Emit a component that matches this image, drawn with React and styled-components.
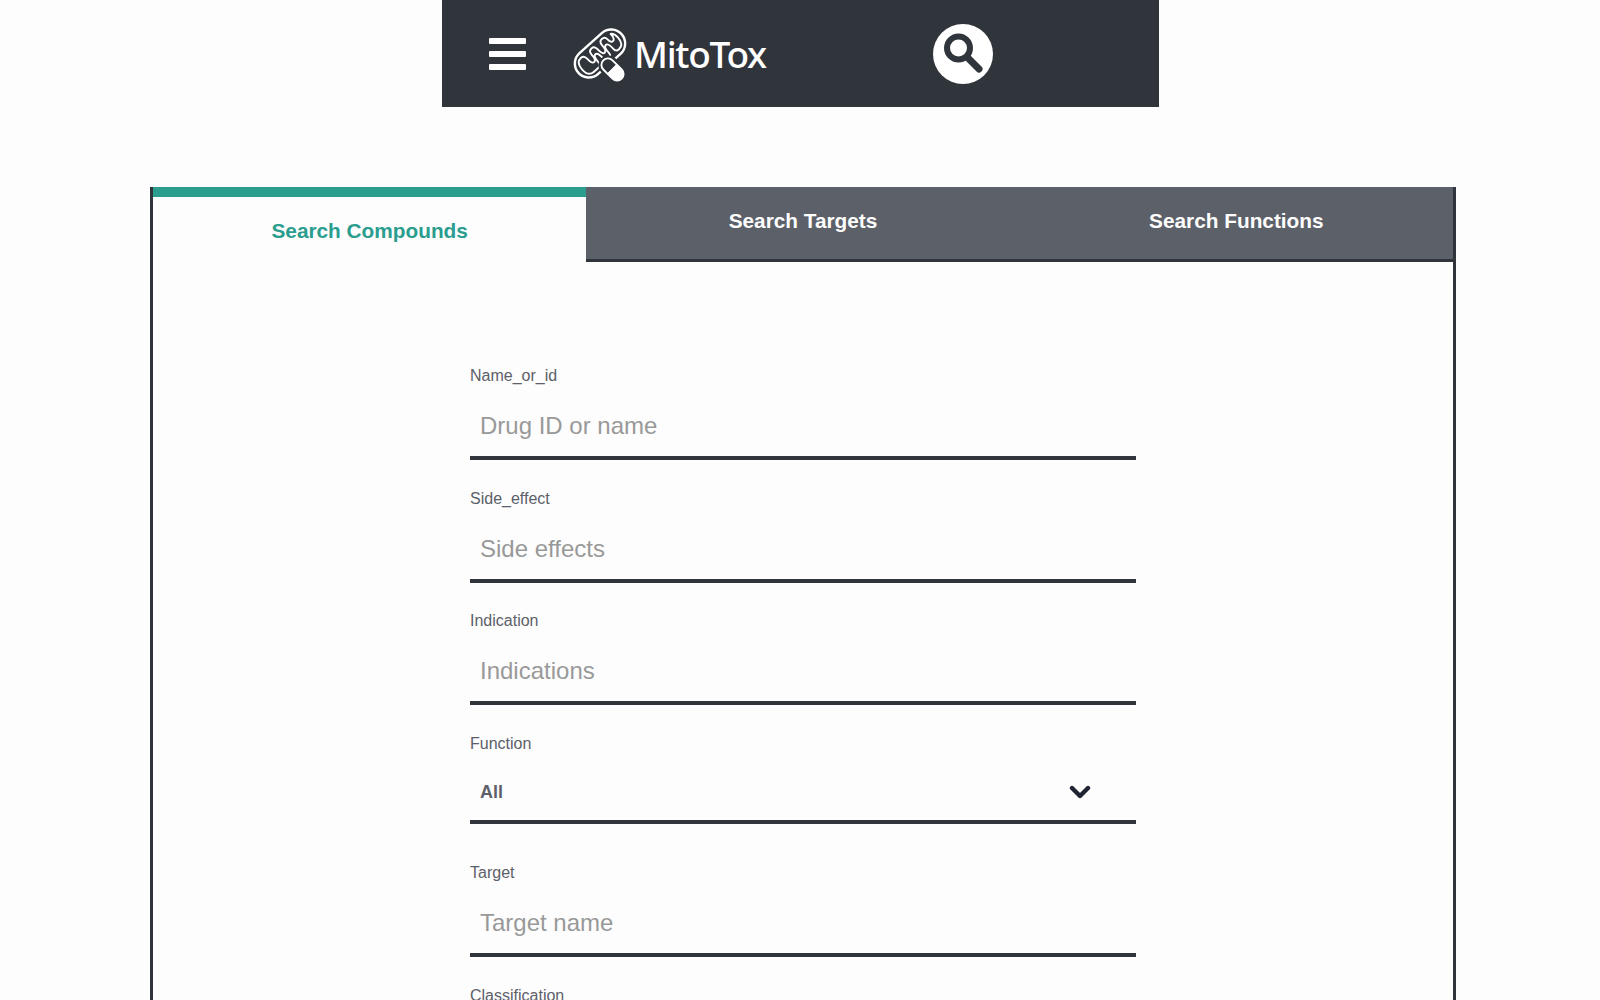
import React from 'react';
import styled, { createGlobalStyle } from 'styled-components';

const GlobalStyle = createGlobalStyle`
  html, body {
    margin: 0;
    padding: 0;
    background: #fdfdfd;
    font-family: "Liberation Sans", Arial, sans-serif;
  }
  * {
    box-sizing: border-box;
  }
`;

const Header = styled.header`
  width: 717px;
  height: 107px;
  margin-left: 442px;
  padding-left: 47px;
  background: #30343b;
  display: flex;
  align-items: center;
`;

const Burger = styled.button`
  width: 37px;
  height: 32px;
  padding: 0;
  border: none;
  background: none;
  display: flex;
  flex-direction: column;
  justify-content: space-between;
  cursor: pointer;
  margin-right: 42px;

  span {
    display: block;
    height: 6px;
    border-radius: 1px;
    background: #fff;
  }
`;

const Brand = styled.a`
  display: flex;
  align-items: center;
  width: 365px;
  color: #fff;
  text-decoration: none;
`;

const BrandName = styled.span`
  font-family: "Noto Sans", sans-serif;
  font-size: 37px;
  font-weight: 500;
  line-height: 1;
  letter-spacing: -1.3px;
`;

const SearchButton = styled.button`
  width: 60px;
  height: 60px;
  padding: 0;
  border: none;
  border-radius: 50%;
  background: #fff;
  display: flex;
  align-items: center;
  justify-content: center;
  cursor: pointer;
`;

const Panel = styled.section`
  width: 1306px;
  margin: 80px 0 0 150px;
  border-left: 3px solid #30343b;
  border-right: 3px solid #30343b;
`;

const Tabs = styled.div`
  display: grid;
  grid-template-columns: repeat(3, 1fr);
  height: 75px;
`;

const Tab = styled.button`
  border: none;
  border-top: ${(p) => (p.$active ? '10px solid #2a9d8f' : 'none')};
  border-bottom: ${(p) => (p.$active ? 'none' : '3px solid #30343b')};
  background: ${(p) => (p.$active ? '#fdfdfd' : '#5c6068')};
  color: ${(p) => (p.$active ? '#2a9d8f' : '#fdfdfd')};
  font-family: inherit;
  font-size: 20.8px;
  font-weight: bold;
  line-height: 24px;
  padding: 22px 0 0;
  display: flex;
  align-items: flex-start;
  justify-content: center;
  cursor: pointer;
`;

const Form = styled.form`
  width: 666px;
  margin: 0 auto;
  padding-top: 105px;
`;

const Field = styled.div`
  display: flex;
  flex-direction: column;
  margin-bottom: ${(p) => p.$gap || 29.7}px;
`;

const Label = styled.label`
  font-size: 16px;
  line-height: 18px;
  color: #5c6068;
`;

const Input = styled.input`
  width: 100%;
  height: 75px;
  padding: 15px 10px 4px;
  border: none;
  border-bottom: 4px solid #30343b;
  border-radius: 0;
  background: transparent;
  font-family: inherit;
  font-size: 24px;
  color: #5c6068;
  outline: none;

  &::placeholder {
    color: #999;
    opacity: 1;
  }
`;

const SelectWrap = styled.div`
  position: relative;
`;

const Select = styled.select`
  width: 100%;
  height: 71px;
  padding: 15px 10px 4px;
  border: none;
  border-bottom: 4px solid #30343b;
  border-radius: 0;
  background: transparent;
  appearance: none;
  font-family: inherit;
  font-size: 18px;
  font-weight: bold;
  color: #5c6068;
  outline: none;
`;

const Chevron = styled.svg`
  position: absolute;
  top: 32px;
  right: 45px;
  pointer-events: none;
`;

function MitoLogo() {
  return (
    <svg width="66" height="62" viewBox="0 0 66 62" fill="none" stroke="#fff" strokeLinecap="round" strokeLinejoin="round">
      <g transform="rotate(-42 32 30.5)">
        <rect x="3" y="16.5" width="58" height="28" rx="14" strokeWidth="2.4" />
        <path
          d="M8 30.5Q8 21 15 21Q19 21 19 26Q19 33 22 33Q25 33 25 26Q25 21 29 21Q33 21 33 26Q33 33 36 33Q39 33 39 26Q39 21 43 21Q47 21 47 25Q47 30 50 30Q53 30 53 23Q56 25 56 30.5Q56 40 49 40Q45 40 45 36Q45 28 42 28Q39 28 39 36Q39 40 35 40Q31 40 31 36Q31 28 28 28Q25 28 25 36Q25 40 21 40L15 40Q8 40 8 30.5Z"
          strokeWidth="1.9"
        />
      </g>
      <g transform="rotate(45 44.5 46.5)">
        <rect x="30" y="38" width="29" height="17" rx="8.5" fill="#30343b" stroke="#30343b" strokeWidth="3" />
        <path d="M44.5 40H38a6.5 6.5 0 0 0 0 13h6.5z" fill="#30343b" stroke="#fff" strokeWidth="1.9" />
        <path d="M44.5 40H51a6.5 6.5 0 0 1 0 13h-6.5z" fill="#fff" stroke="#fff" strokeWidth="1.9" />
      </g>
    </svg>
  );
}

export default function App() {
  return (
    <>
      <GlobalStyle />
      <Header>
        <Burger aria-label="Menu">
          <span />
          <span />
          <span />
        </Burger>
        <Brand href="#">
          <MitoLogo />
          <BrandName>MitoTox</BrandName>
        </Brand>
        <SearchButton aria-label="Search">
          <svg width="44" height="44" viewBox="0 0 44 44" fill="none" stroke="#30343b" strokeLinecap="round">
            <circle cx="17.5" cy="16" r="11.5" strokeWidth="6" />
            <path d="M27 26l11 11" strokeWidth="7" />
          </svg>
        </SearchButton>
      </Header>
      <Panel>
        <Tabs>
          <Tab $active>Search Compounds</Tab>
          <Tab>Search Targets</Tab>
          <Tab>Search Functions</Tab>
        </Tabs>
        <Form>
          <Field>
            <Label>Name_or_id</Label>
            <Input placeholder="Drug ID or name" />
          </Field>
          <Field>
            <Label>Side_effect</Label>
            <Input placeholder="Side effects" />
          </Field>
          <Field>
            <Label>Indication</Label>
            <Input placeholder="Indications" />
          </Field>
          <Field $gap={40.4}>
            <Label>Function</Label>
            <SelectWrap>
              <Select defaultValue="All">
                <option>All</option>
              </Select>
              <Chevron width="22" height="14" viewBox="0 0 22 14" fill="none" stroke="#1f2430" strokeWidth="4.4" strokeLinecap="round" strokeLinejoin="round">
                <path d="M3 3l8 8 8-8" />
              </Chevron>
            </SelectWrap>
          </Field>
          <Field>
            <Label>Target</Label>
            <Input placeholder="Target name" />
          </Field>
          <Field>
            <Label>Classification</Label>
            <Input placeholder="Classification" />
          </Field>
        </Form>
      </Panel>
    </>
  );
}
